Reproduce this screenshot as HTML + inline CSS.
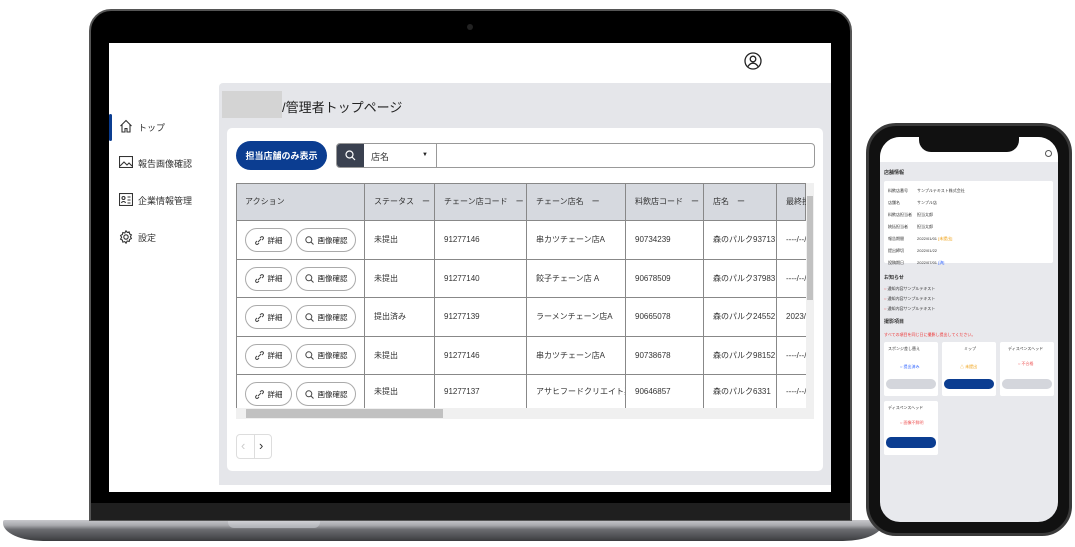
<!DOCTYPE html>
<html><head><meta charset="utf-8"><style>
*{box-sizing:border-box;margin:0;padding:0}
body{width:1075px;height:547px;background:#fff;position:relative;overflow:hidden;font-family:"Liberation Sans","Noto Sans CJK JP",sans-serif;color:#222}
.a{position:absolute}
.t{font-size:9px;color:#333;white-space:nowrap}
.row{position:absolute;left:236px;width:570px;border-top:1px solid #888}
.cell{position:absolute;top:0;height:100%;border-left:1px solid #888;font-size:8px;color:#333;display:flex;align-items:center;padding-left:9px;white-space:nowrap;overflow:hidden}
.pill{position:absolute;height:24px;border:1px solid #aaa;border-radius:12px;font-size:7.5px;display:flex;align-items:center;justify-content:center;gap:4px;background:#fff}
.pt{font-size:4px;color:#333;white-space:nowrap}
</style></head><body>
<!-- laptop base -->
<div class="a" style="left:3px;top:520px;width:880px;height:21px;background:linear-gradient(#c8c8cc 0,#a9aaae 25%,#6b6c70 45%,#4e4f53 80%,#3a3b3e);border-radius:2px 2px 40px 40px/2px 2px 18px 18px"></div>
<div class="a" style="left:228px;top:520px;width:92px;height:8px;background:linear-gradient(#d6d6da,#aeb0b5);border-radius:0 0 6px 6px"></div>
<!-- laptop lid -->
<div class="a" style="left:89px;top:9px;width:763px;height:512px;background:#000;border-radius:22px 22px 0 0;border:2px solid #555"></div>
<div class="a" style="left:91px;top:503px;width:759px;height:17px;background:#1f1f1f"></div>
<div class="a" style="left:467px;top:24px;width:6px;height:6px;border-radius:3px;background:#222"></div>
<!-- screen -->
<div class="a" style="left:109px;top:43px;width:722px;height:449px;background:#fff"></div>
<svg class="a" style="left:744px;top:52px" width="18" height="18" viewBox="0 0 18 18" fill="none" stroke="#222" stroke-width="1.3"><circle cx="9" cy="9" r="8"/><circle cx="9" cy="7" r="2.8"/><path d="M4 14.5c1.5-2.5 3-3.3 5-3.3s3.5.8 5 3.3"/></svg>
<!-- sidebar -->
<div class="a" style="left:109px;top:114px;width:3px;height:27px;background:#0b3d91;border-radius:2px"></div>
<svg class="a" style="left:119px;top:119px" width="14" height="14" viewBox="0 0 14 14" fill="none" stroke="#333" stroke-width="1.1"><path d="M1.5 7L7 1.5 12.5 7M3 5.5V13h3V9.5h2V13h3V5.5"/></svg>
<div class="a t" style="left:138px;top:121px">トップ</div>
<svg class="a" style="left:119px;top:156px" width="14" height="12" viewBox="0 0 14 12" fill="none" stroke="#333" stroke-width="1.1"><rect x=".5" y=".5" width="13" height="11"/><path d="M1 10l4-4 3 3 2-2 3 3"/></svg>
<div class="a t" style="left:138px;top:157px">報告画像確認</div>
<svg class="a" style="left:119px;top:193px" width="14" height="13" viewBox="0 0 14 13" fill="none" stroke="#333" stroke-width="1.1"><rect x=".5" y=".5" width="13" height="12"/><circle cx="4.5" cy="5" r="1.5"/><path d="M2.5 10c.5-2 3.5-2 4 0M8.5 4h3M8.5 7h3M8.5 10h3"/></svg>
<div class="a t" style="left:138px;top:194px">企業情報管理</div>
<svg class="a" style="left:119px;top:230px" width="14" height="14" viewBox="0 0 14 14" fill="none" stroke="#333" stroke-width="1.1"><circle cx="7" cy="7" r="2.2"/><path d="M7 .8l1.2 1.6 2-.5.4 2 1.8 1-1 1.8 1 1.8-1.8 1-.4 2-2-.5L7 13.2l-1.2-1.6-2 .5-.4-2-1.8-1 1-1.8-1-1.8 1.8-1 .4-2 2 .5z"/></svg>
<div class="a t" style="left:138px;top:231px">設定</div>
<!-- main panel -->
<div class="a" style="left:219px;top:83px;width:612px;height:402px;background:#e5e6ea;border-radius:4px 0 0 0"></div>
<div class="a" style="left:222px;top:91px;width:60px;height:27px;background:#d4d4d4"></div>
<div class="a" style="left:282px;top:97px;font-size:13px;color:#222">/管理者トップページ</div>
<div class="a" style="left:227px;top:128px;width:596px;height:343px;background:#fff;border-radius:5px"></div>
<div class="a" style="left:236px;top:141px;width:91px;height:29px;background:#0b3d91;border-radius:15px;color:#fff;font-size:9px;display:flex;align-items:center;justify-content:center;font-weight:bold">担当店舗のみ表示</div>
<div class="a" style="left:336px;top:143px;width:479px;height:25px;border:1px solid #999;border-radius:4px;overflow:hidden">
 <div class="a" style="left:0;top:0;width:27px;height:25px;background:#3a4150"></div>
 <svg class="a" style="left:8px;top:6px" width="11" height="11" viewBox="0 0 11 11" fill="none" stroke="#fff" stroke-width="1.2"><circle cx="4.5" cy="4.5" r="3.5"/><path d="M7 7l3 3"/></svg>
 <div class="a" style="left:27px;top:0;width:73px;height:25px;border-right:1px solid #999"></div>
 <div class="a t" style="left:34px;top:6px">店名</div>
 <div class="a" style="left:85px;top:8px;font-size:6px">▼</div>
</div>
<!-- table -->
<div class="a" style="left:236px;top:183px;width:570px;height:37px;background:#d6d9df;border:1px solid #888;border-bottom:none"></div>
<div class="row" style="top:183px;height:37px;border-top:none">
 <div class="cell" style="left:0;border-left:none">アクション</div>
 <div class="cell" style="left:128px">ステータス　ー</div>
 <div class="cell" style="left:198px">チェーン店コード　ー</div>
 <div class="cell" style="left:290px">チェーン店名　ー</div>
 <div class="cell" style="left:389px">料飲店コード　ー</div>
 <div class="cell" style="left:467px">店名　ー</div>
 <div class="cell" style="left:540px;width:30px;overflow:hidden">最終投稿</div>
</div>
<div class="a" style="left:236px;top:183px;width:1px;height:225px;background:#888"></div>
<div id="rows"></div>
<script>
var d=[["未提出","91277146","串カツチェーン店A","90734239","森のパルク93713","----/--/--"],["未提出","91277140","餃子チェーン店 A","90678509","森のパルク37983","----/--/--"],["提出済み","91277139","ラーメンチェーン店A","90665078","森のパルク24552","2023/0"],["未提出","91277146","串カツチェーン店A","90738678","森のパルク98152","----/--/--"],["未提出","91277137","アサヒフードクリエイト興","90646857","森のパルク6331","----/--/--"]];
var L=[128,198,290,389,467,540],W=[70,92,99,78,73,30],h="";
d.forEach(function(r,i){var t=220+i*38.5,hh=i==4?34:38.5;
h+='<div class="row" style="top:'+t+'px;height:'+hh+'px">';
h+='<div class="pill" style="left:9px;top:7px;width:47px"><svg width="9" height="9" viewBox="0 0 9 9" fill="none" stroke="#444" stroke-width="1"><path d="M3 6l3-3M2 5L1 6a1.4 1.4 0 002 2l1-1M5 2l1-1a1.4 1.4 0 012 2L7 4"/></svg>詳細</div>';
h+='<div class="pill" style="left:60px;top:7px;width:60px"><svg width="9" height="9" viewBox="0 0 9 9" fill="none" stroke="#444" stroke-width="1"><circle cx="3.8" cy="3.8" r="3"/><path d="M6 6l2.5 2.5"/></svg>画像確認</div>';
r.forEach(function(c,j){h+='<div class="cell" style="left:'+L[j]+'px;width:'+W[j]+'px">'+c+'</div>'});h+='</div>'});
document.getElementById('rows').innerHTML=h;
</script>
<div class="a" style="left:806px;top:183px;width:8px;height:225px;background:#f0f0f0"></div>
<div class="a" style="left:807px;top:196px;width:6px;height:104px;background:#c1c1c1"></div>
<div class="a" style="left:236px;top:408px;width:578px;height:11px;background:#f0f0f0"></div>
<div class="a" style="left:246px;top:409px;width:197px;height:9px;background:#c1c1c1"></div>
<div class="a" style="left:236px;top:434px;width:36px;height:25px;border:1px solid #ddd;border-radius:4px"></div>
<div class="a" style="left:254px;top:434px;width:1px;height:25px;background:#ddd"></div>
<div class="a" style="left:241px;top:438px;font-size:13px;color:#ccc">‹</div>
<div class="a" style="left:259px;top:438px;font-size:13px;color:#333">›</div>
<!-- phone -->
<div class="a" style="left:866px;top:123px;width:206px;height:413px;background:#111;border-radius:30px;border:3px solid #3a3a3a"></div>
<div class="a" style="left:880px;top:137px;width:178px;height:385px;background:#e8e9ed;border-radius:20px;overflow:hidden">
 <div class="a" style="left:0;top:0;width:178px;height:25px;background:#fff"></div>
 <div class="a" style="left:39px;top:0;width:100px;height:15px;background:#111;border-radius:0 0 12px 12px"></div>
 <div class="a" style="left:165px;top:13px;width:7px;height:7px;border:1px solid #555;border-radius:4px"></div>
 <div class="a pt" style="left:4px;top:32px;font-size:5px;font-weight:bold">店舗情報</div>
 <div class="a" style="left:4px;top:44px;width:169px;height:82px;background:#fff;border-radius:2px"></div>
 <div class="a pt" style="left:8px;top:48px;line-height:12px">料飲店番号<br>店舗名<br>料飲店担当者<br>統括担当者<br>報告期間<br>提出締切<br>投稿期日</div>
 <div class="a pt" style="left:37px;top:48px;line-height:12px">サンプルテキスト株式会社<br>サンプル店<br>担当太郎<br>担当太郎<br>2022/01/01 <span style="color:#e90">[未提出]</span><br>2022/01/22<br>2022/07/01 <span style="color:#36f">[済]</span></div>
 <div class="a pt" style="left:4px;top:137px;font-size:5px;font-weight:bold">お知らせ</div>
 <div class="a pt" style="left:4px;top:147px;line-height:10px"><span style="color:#e55">○</span> 通知内容サンプルテキスト<br><span style="color:#e55">○</span> 通知内容サンプルテキスト<br><span style="color:#e55">○</span> 通知内容サンプルテキスト</div>
 <div class="a pt" style="left:4px;top:181px;font-size:5px;font-weight:bold">撮影項目</div>
 <div class="a pt" style="left:4px;top:195px;color:#e33">すべての項目を同じ日に撮影し提出してください。</div>
 <div class="a" style="left:4px;top:205px;width:54px;height:54px;background:#fff;border-radius:2px"></div>
 <div class="a" style="left:62px;top:205px;width:54px;height:54px;background:#fff;border-radius:2px"></div>
 <div class="a" style="left:120px;top:205px;width:54px;height:54px;background:#fff;border-radius:2px"></div>
 <div class="a" style="left:4px;top:264px;width:54px;height:54px;background:#fff;border-radius:2px"></div>
 <div class="a pt" style="left:8px;top:209px">スポンジ差し替え</div><div class="a pt" style="left:84px;top:209px">ミップ</div><div class="a pt" style="left:128px;top:209px">ディスペンスヘッド</div>
 <div class="a pt" style="left:20px;top:227px;color:#36f">○ 提出済み</div><div class="a pt" style="left:80px;top:227px;color:#e90">△ 未提出</div><div class="a pt" style="left:138px;top:224px;color:#e55">○ 不合格</div>
 <div class="a" style="left:6px;top:242px;width:50px;height:10px;background:#d4d6dc;border-radius:5px"></div>
 <div class="a" style="left:64px;top:242px;width:50px;height:10px;background:#0b3d91;border-radius:5px"></div>
 <div class="a" style="left:122px;top:242px;width:50px;height:10px;background:#d4d6dc;border-radius:5px"></div>
 <div class="a pt" style="left:8px;top:268px">ディスペンスヘッド</div>
 <div class="a pt" style="left:20px;top:283px;color:#e55">○ 画像不鮮明</div>
 <div class="a" style="left:6px;top:300px;width:50px;height:11px;background:#0b3d91;border-radius:5px"></div>
</div>
</body></html>
